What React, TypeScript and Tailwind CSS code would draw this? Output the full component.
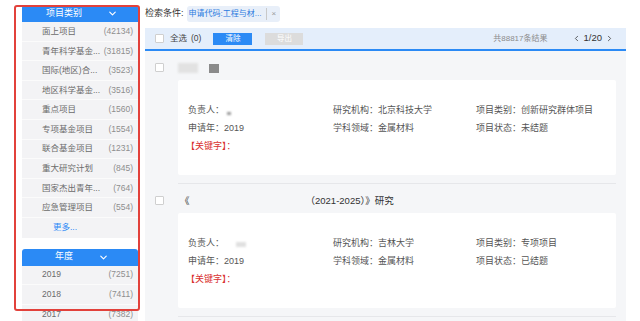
import { ChevronDown, ChevronLeft, ChevronRight } from 'lucide-react'

const font = { fontFamily: '"Liberation Sans", "Noto Sans CJK SC", sans-serif' }

const categories = [
  { name: '面上项目', count: '(42134)' },
  { name: '青年科学基金...', count: '(31815)' },
  { name: '国际(地区)合...', count: '(3523)' },
  { name: '地区科学基金...', count: '(3516)' },
  { name: '重点项目', count: '(1560)' },
  { name: '专项基金项目', count: '(1554)' },
  { name: '联合基金项目', count: '(1231)' },
  { name: '重大研究计划', count: '(845)' },
  { name: '国家杰出青年...', count: '(764)' },
  { name: '应急管理项目', count: '(554)' },
]

const years = [
  { name: '2019', count: '(7251)' },
  { name: '2018', count: '(7411)' },
  { name: '2017', count: '(7382)' },
]

function FacetRow({ name, count }: { name: string; count: string }) {
  return (
    <div className="flex items-center justify-between h-[19.6px] pl-[20px] pr-[5px] bg-[#f3f3f5] border-b border-[#fbfbfb] text-[8.5px]">
      <span className="text-[#6b6b6b]">{name}</span>
      <span className="text-[#8e8e8e]">{count}</span>
    </div>
  )
}

function FacetHeader({ title, chevronGap }: { title: string; chevronGap: string }) {
  return (
    <div className="flex items-center h-[17px] bg-[#2b8af5] rounded-t-[3px] text-white text-[9px]">
      <span className="w-[84px] text-center">{title}</span>
      <ChevronDown size={11} strokeWidth={2.5} className={chevronGap} />
    </div>
  )
}

function Checkbox() {
  return <div className="w-[9px] h-[9px] bg-white border border-[#cfcfcf] rounded-[1px]" />
}

function Field({ label, value }: { label: string; value?: React.ReactNode }) {
  return (
    <div className="flex items-center h-[18px] text-[9px] text-[#555]">
      <span>{label}：</span>
      {value}
    </div>
  )
}

function Blob({ className }: { className: string }) {
  return <span className={'inline-block blur-[1px] ' + className} />
}

interface Item {
  title: React.ReactNode
  leader: React.ReactNode
  org: string
  type: string
  year: string
  field: string
  status: string
}

const items: Item[] = [
  {
    title: (
      <div className="flex items-center">
        <Blob className="w-[20px] h-[10px] bg-[#e2e2e2]" />
        <span className="inline-block w-[10px] h-[9px] bg-[#8b8b8b] ml-[11px]" />
      </div>
    ),
    leader: <Blob className="w-[4px] h-[3px] bg-[#999] ml-[3px] mt-[5px]" />,
    org: '北京科技大学',
    type: '创新研究群体项目',
    year: '2019',
    field: '金属材料',
    status: '未结题',
  },
  {
    title: (
      <div className="flex items-center text-[9.5px] text-[#333]">
        <span className="ml-[2px]">《</span>
        <span className="ml-[116px]">（2021-2025）》研究</span>
      </div>
    ),
    leader: <Blob className="w-[10px] h-[5px] bg-[#e0e0e0] ml-[12px]" />,
    org: '吉林大学',
    type: '专项项目',
    year: '2019',
    field: '金属材料',
    status: '已结题',
  },
]

function ResultItem({ item }: { item: Item }) {
  return (
    <div className="flex">
      <div className="w-[23px] pt-[12px]">
        <Checkbox />
      </div>
      <div className="flex-1">
        <div className="pt-[9px] h-[25px] flex items-center">{item.title}</div>
        <div className="mt-[4px] h-[95px] bg-white rounded-[2px] pt-[22px] pl-[10px] grid grid-cols-[145px_143px_1fr] content-start">
          <Field label="负责人" value={item.leader} />
          <Field label="研究机构" value={item.org} />
          <Field label="项目类别" value={item.type} />
          <Field label="申请年" value={item.year} />
          <Field label="学科领域" value={item.field} />
          <Field label="项目状态" value={item.status} />
          <div className="flex items-center h-[18px] text-[9px] text-[#d9302f] ml-[-2px]">【关键字】：</div>
        </div>
        <div className="h-[9px] border-b border-[#e6e7ea]" />
      </div>
    </div>
  )
}

export default function App() {
  return (
    <div className="relative w-[640px] h-[321px] bg-white overflow-hidden flex" style={font}>
      {/* Sidebar */}
      <aside className="w-[145px] pl-[22px] pr-[7px] pt-[5px]">
        <FacetHeader title="项目类别" chevronGap="ml-[1px]" />
        {categories.map((c) => (
          <FacetRow key={c.name} {...c} />
        ))}
        <div className="h-[19.6px] flex items-center pl-[31px] bg-[#f3f3f5] text-[8.5px] text-[#2b8af5]">更多...</div>
        <div className="h-[11px]" />
        <FacetHeader title="年度" chevronGap="ml-[-8px]" />
        {years.map((y) => (
          <FacetRow key={y.name} {...y} />
        ))}
      </aside>

      {/* Main */}
      <main className="w-[481px]">
        <div className="h-[28px] flex items-center text-[9px] text-[#333]">
          <span>检索条件:</span>
          <div className="ml-[3px] h-[16px] flex items-center bg-[#e8eff9] rounded-[3px] text-[8px]">
            <span className="pl-[2px] pr-[5px] text-[#2a7be0]">申请代码:工程与材...</span>
            <span className="w-px h-[12px] bg-[#c9c9c9]" />
            <span className="px-[4px] text-[#9a9a9a]">×</span>
          </div>
        </div>

        <div className="h-[23px] flex items-center bg-[#e4eefb] border-b-2 border-[#2b8af5] pl-[10px] pr-[12px] text-[8.5px] text-[#444]">
          <Checkbox />
          <span className="ml-[6px]">全选</span>
          <span className="ml-[4px]">(0)</span>
          <button className="ml-[12px] w-[39px] h-[12px] bg-[#2b8af5] text-white text-[7.5px] leading-none">清除</button>
          <button className="ml-[13px] w-[38px] h-[12px] bg-[#dcdcdc] text-white text-[7.5px] leading-none">导出</button>
          <span className="ml-auto text-[#8c8c8c] text-[8px]">共88817条结果</span>
          <div className="ml-[24px] flex items-center text-[#333] text-[9.5px]">
            <ChevronLeft size={9} strokeWidth={2} />
            <span className="mx-[3px]">1/20</span>
            <ChevronRight size={9} strokeWidth={2} />
          </div>
        </div>

        <div className="bg-[#f5f6f8] h-[270px] pl-[10px] pr-[10px]">
          {items.map((item, i) => (
            <ResultItem key={i} item={item} />
          ))}
        </div>
      </main>

      {/* Annotation frame */}
      <div className="absolute left-[14px] top-[5px] w-[126px] h-[306px] border-2 border-[#e2413b] rounded-[3px] pointer-events-none" />
    </div>
  )
}
